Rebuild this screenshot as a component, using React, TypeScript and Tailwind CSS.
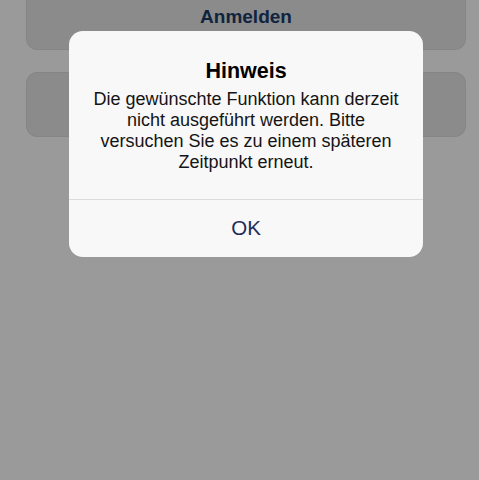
export default function App() {
  const lines = [
    'Die gewünschte Funktion kann derzeit',
    'nicht ausgeführt werden. Bitte',
    'versuchen Sie es zu einem späteren',
    'Zeitpunkt erneut.',
  ];

  return (
    <div className="relative h-[480px] w-[479px] overflow-hidden bg-[#9a9a9a] font-['Liberation_Sans',Arial,sans-serif]">
      <div className="flex flex-col gap-[22px] pl-[26px] -mt-[15px]">
        <button className="h-[65px] w-[440px] rounded-[11px] border border-[#858585] bg-[#8b8b8b] text-[19px] font-bold text-[#10243f]">
          Anmelden
        </button>
        <button className="h-[65px] w-[440px] rounded-[11px] border border-[#858585] bg-[#8b8b8b]" />
      </div>

      <div className="absolute left-[69px] top-[31px] flex w-[354px] flex-col rounded-[14px] bg-[#f8f8f8]">
        <div className="flex flex-col items-center px-3 pt-[27px] pb-[26px] text-center">
          <h2 className="text-[21.5px] leading-[26px] font-bold text-black">Hinweis</h2>
          <p className="mt-[5px] text-[18px] leading-[21px] text-[#141414]">
            {lines.map((l) => (
              <span key={l} className="block">
                {l}
              </span>
            ))}
          </p>
        </div>
        <div className="h-px bg-[#dcdcdc]" />
        <button className="h-[57px] text-[20.5px] text-[#1e2b5c]">OK</button>
      </div>
    </div>
  );
}
